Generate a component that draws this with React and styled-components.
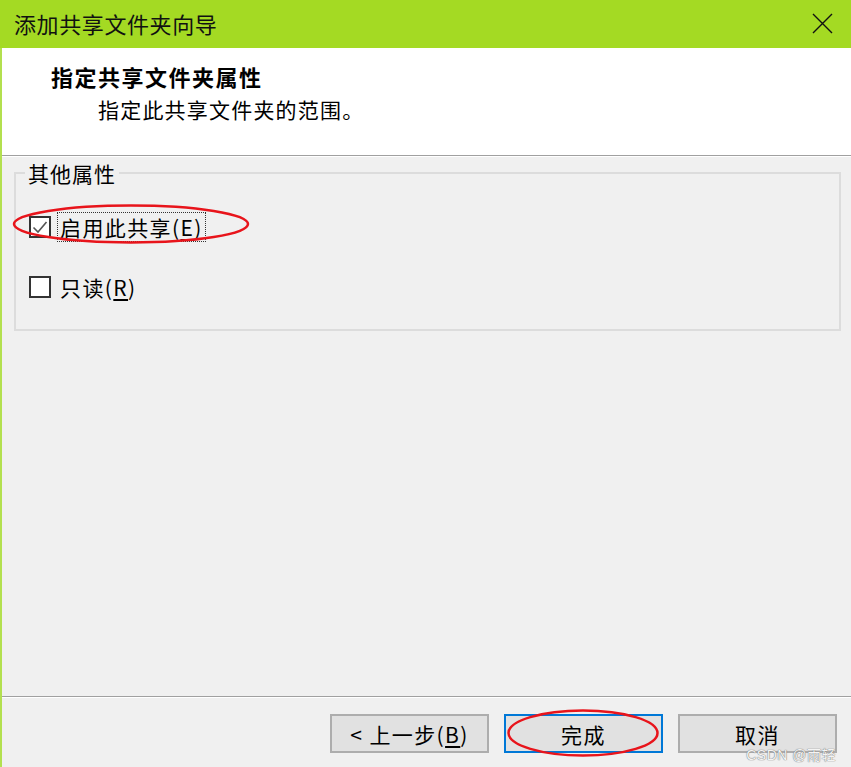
import React from "react";
import styled, { createGlobalStyle } from "styled-components";

const Global = createGlobalStyle`
  html, body { margin: 0; padding: 0; background: #f0f0f0; }
  body { font-family: "Noto Sans CJK SC", "Noto Sans", sans-serif; }
  * { box-sizing: border-box; }
`;

const Window = styled.div`
  width: 851px;
  height: 767px;
  display: flex;
  flex-direction: column;
  background: #f0f0f0;
  overflow: hidden;
  position: relative;
`;

const TitleBar = styled.div`
  height: 48px;
  background: #a4da23;
  display: flex;
  align-items: center;
  justify-content: space-between;
  padding: 0 18px 2px 14px;
  flex-shrink: 0;
`;

const TitleText = styled.div`
  font-size: 22px;
  color: #111;
  line-height: 1;
  letter-spacing: 0.6px;
`;

const CloseBtn = styled.div`
  width: 22px;
  height: 22px;
  display: flex;
  align-items: center;
  justify-content: center;
`;

const Frame = styled.div`
  flex: 1;
  display: flex;
  flex-direction: column;
  border-left: 2px solid #b3e04f;
`;

const Header = styled.div`
  height: 108px;
  background: #ffffff;
  border-bottom: 1px solid #a0a0a0;
  box-shadow: 0 1px 0 #ffffff;
  padding: 14px 0 0 49px;
  display: flex;
  flex-direction: column;
  flex-shrink: 0;
`;

const Heading = styled.div`
  font-size: 22px;
  font-weight: 700;
  color: #000;
  line-height: 28px;
  letter-spacing: 1.5px;
`;

const SubHeading = styled.div`
  font-size: 21px;
  color: #000;
  line-height: 28px;
  margin-top: 5px;
  padding-left: 47px;
  letter-spacing: 1.2px;
`;

const Body = styled.div`
  flex: 1;
  padding: 4px 10px 0 12px;
`;

const Group = styled.fieldset`
  margin: 0;
  padding: 0;
  border: 2px solid #dcdcdc;
  height: 171px;
  position: relative;
`;

const Legend = styled.legend`
  margin-left: 9px;
  padding: 0 3px;
  font-size: 21px;
  line-height: 26px;
  color: #000;
  letter-spacing: 1px;
`;

const Options = styled.div`
  display: flex;
  flex-direction: column;
  gap: 32px;
  padding: 27px 0 0 13px;
`;

const Row = styled.label`
  display: flex;
  align-items: center;
  height: 28px;
  position: relative;
`;

const Box = styled.span`
  width: 22px;
  height: 22px;
  border: 2px solid #333;
  background: #fff;
  display: flex;
  align-items: center;
  justify-content: center;
  flex-shrink: 0;
`;

const Label = styled.span`
  margin-left: 6px;
  padding: 0 2px;
  font-size: 21px;
  line-height: 28px;
  color: #000;
  letter-spacing: 1.4px;
  border: 1px ${(p) => (p.$focus ? "dotted #333" : "solid transparent")};
`;

const Key = styled.span`
  text-decoration: underline;
  text-underline-offset: 3px;
`;

const Ellipse = styled.svg`
  position: absolute;
  pointer-events: none;
  overflow: visible;
`;

const Footer = styled.div`
  height: 71px;
  border-top: 1px solid #a0a0a0;
  box-shadow: inset 0 1px 0 #ffffff;
  display: flex;
  justify-content: flex-end;
  align-items: flex-start;
  gap: 15px;
  padding: 17px 14px 0 0;
  flex-shrink: 0;
  position: relative;
`;

const Button = styled.div`
  width: 159px;
  height: 39px;
  background: #e1e1e1;
  border: ${(p) => (p.$primary ? "2px solid #0078d7" : "2px solid #adadad")};
  display: flex;
  align-items: center;
  justify-content: center;
  font-size: 21px;
  color: #000;
  letter-spacing: 1.4px;
  position: relative;
`;

const Watermark = styled.div`
  position: absolute;
  right: 15px;
  bottom: 4px;
  font-family: "Liberation Sans", "Noto Sans CJK SC", sans-serif;
  font-size: 14px;
  line-height: 16px;
  color: #f4f4f4;
  text-shadow: 0 0 1px #777, 0 0 1px #777;
  letter-spacing: 0.5px;
`;

const Check = () => (
  <svg width="18" height="18" viewBox="0 0 18 18">
    <path d="M2.5 9.5 L7 14 L15.5 4" fill="none" stroke="#555" strokeWidth="1.6" />
  </svg>
);

export default function App() {
  return (
    <Window>
      <Global />
      <TitleBar>
        <TitleText>添加共享文件夹向导</TitleText>
        <CloseBtn>
          <svg width="21" height="21" viewBox="0 0 21 21">
            <path d="M1 1 L20 20 M20 1 L1 20" stroke="#111" strokeWidth="1.4" />
          </svg>
        </CloseBtn>
      </TitleBar>
      <Frame>
        <Header>
          <Heading>指定共享文件夹属性</Heading>
          <SubHeading>指定此共享文件夹的范围。</SubHeading>
        </Header>
        <Body>
          <Group>
            <Legend>其他属性</Legend>
            <Options>
              <Row>
                <Box>
                  <Check />
                </Box>
                <Label $focus>
                  启用此共享(<Key>E</Key>)
                </Label>
                <Ellipse
                  width="238"
                  height="40"
                  style={{ left: -17, top: -9 }}
                  viewBox="0 0 238 40"
                >
                  <ellipse cx="119" cy="20" rx="117" ry="18.5" fill="none" stroke="#e8141b" strokeWidth="2.5" />
                </Ellipse>
              </Row>
              <Row>
                <Box />
                <Label>
                  只读(<Key>R</Key>)
                </Label>
              </Row>
            </Options>
          </Group>
        </Body>
        <Footer>
          <Button>
            &lt; 上一步(<Key>B</Key>)
          </Button>
          <Button $primary>
            完成
            <Ellipse
              width="152"
              height="48"
              style={{ left: 1, top: -7 }}
              viewBox="0 0 152 48"
            >
              <ellipse cx="76" cy="24" rx="74.5" ry="22.5" fill="none" stroke="#e8141b" strokeWidth="2.5" />
            </Ellipse>
          </Button>
          <Button>取消</Button>
          <Watermark>CSDN @雨轻</Watermark>
        </Footer>
      </Frame>
    </Window>
  );
}
